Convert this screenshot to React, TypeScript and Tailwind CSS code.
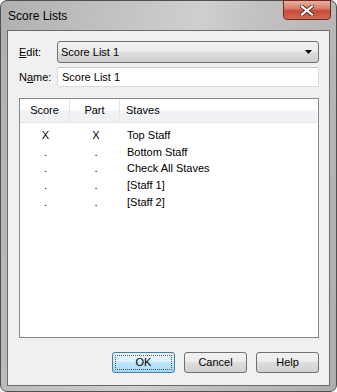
import React from 'react';

const font = { fontFamily: '"Liberation Sans", Arial, sans-serif' };

const rows = [
    { score: 'X', part: 'X', staff: 'Top Staff' },
    { score: '.', part: '.', staff: 'Bottom Staff' },
    { score: '.', part: '.', staff: 'Check All Staves' },
    { score: '.', part: '.', staff: '[Staff 1]' },
    { score: '.', part: '.', staff: '[Staff 2]' },
];

function DlgButton({ label, primary }: { label: string; primary?: boolean }) {
    if (primary) {
        return (
            <button className="w-[63px] h-[21px] rounded-[3px] border border-[#3c7fb1] bg-[linear-gradient(#eaf6fd_0%,#d9f0fc_50%,#bee6fd_50%,#a7d9f5_100%)] p-[2px] text-[11px] text-black">
                <div className="w-full h-full flex items-center justify-center border border-dotted border-[#555]">
                    {label}
                </div>
            </button>
        );
    }
    return (
        <button className="w-[63px] h-[21px] rounded-[3px] border border-[#707070] bg-[linear-gradient(#f2f2f2_0%,#ebebeb_50%,#dddddd_50%,#cfcfcf_100%)] flex items-center justify-center text-[11px] text-black">
            {label}
        </button>
    );
}

export default function App() {
    return (
        <div
            className="w-[337px] h-[392px] rounded-[7px] border border-[#505050] bg-[linear-gradient(100deg,#b0b0b0_0%,#c6c6c6_35%,#cfcfcf_50%,#c1c1c1_65%,#aeaeae_100%)] flex flex-col"
            style={font}
        >
            {/* title bar */}
            <div className="relative h-[29px] shrink-0">
                <div className="pl-[7px] pt-[7px] text-[12px] text-black leading-[16px]">Score Lists</div>
                <div className="absolute top-[-1px] right-[5px] w-[48px] h-[20px] rounded-b-[4px] border border-[#6e2a22] bg-[linear-gradient(#eab0a2_0%,#d9806c_40%,#c84a36_55%,#d26a54_100%)] flex items-center justify-center">
                    <svg width="14" height="11" viewBox="0 0 14 11">
                        <path d="M2 1.5 L12 9.5 M12 1.5 L2 9.5" stroke="#5a2a24" strokeWidth="4" strokeLinecap="square" />
                        <path d="M2 1.5 L12 9.5 M12 1.5 L2 9.5" stroke="#ffffff" strokeWidth="2.2" strokeLinecap="square" />
                    </svg>
                </div>
            </div>

            {/* client area */}
            <div className="mx-[6px] mb-[5px] flex-1 border border-[#6a6a6a] bg-[#f0f0f0] flex flex-col px-[11px] pr-[10px] pt-[10px] pb-[12px] text-[11px] text-black">
                <div className="flex items-center h-[22px]">
                    <div className="w-[38px]">
                        <u>E</u>dit:
                    </div>
                    <div className="flex-1 h-[22px] rounded-[3px] border border-[#707070] bg-[linear-gradient(#f2f2f2_0%,#ebebeb_50%,#dddddd_50%,#cfcfcf_100%)] flex items-center pl-[3px] pr-[5px]">
                        <span className="flex-1">Score List 1</span>
                        <svg width="8" height="5" viewBox="0 0 8 5">
                            <path d="M0 0 H7 L3.5 4 Z" fill="#000" />
                        </svg>
                    </div>
                </div>
                <div className="flex items-center h-[20px] mt-[4px]">
                    <div className="w-[38px]">
                        N<u>a</u>me:
                    </div>
                    <div className="flex-1 h-[20px] rounded-[2px] border border-[#dadada] border-t-[#c8c8c8] bg-white flex items-center pl-[4px]">
                        Score List 1
                    </div>
                </div>

                {/* list view */}
                <div className="mt-[11px] h-[240px] border border-[#828790] bg-white">
                    <div className="flex h-[24px] mr-[1px] border-b border-[#e5e5e5] bg-[linear-gradient(#ffffff_0%,#ffffff_45%,#f1f2f4_55%,#eef0f3_100%)]">
                        <div className="w-[50px] flex items-center justify-center border-r border-[#e3e5e8]">Score</div>
                        <div className="w-[50px] flex items-center justify-center border-r border-[#e3e5e8]">Part</div>
                        <div className="flex-1 flex items-center pl-[6px]">Staves</div>
                    </div>
                    <div className="pt-[4px]">
                        {rows.map((r, i) => (
                            <div key={i} className="flex h-[16.7px] items-center">
                                <div className="w-[51px] text-center">{r.score}</div>
                                <div className="w-[50px] text-center">{r.part}</div>
                                <div className="pl-[6px]">{r.staff}</div>
                            </div>
                        ))}
                    </div>
                </div>

                <div className="mt-[14px] flex justify-end gap-[9px]">
                    <DlgButton label="OK" primary />
                    <DlgButton label="Cancel" />
                    <DlgButton label="Help" />
                </div>
            </div>
        </div>
    );
}
